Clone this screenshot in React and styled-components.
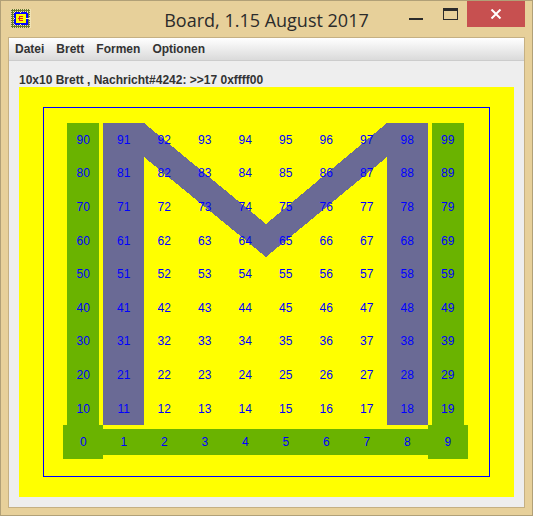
import React from "react";
import styled, { createGlobalStyle } from "styled-components";

const GlobalStyle = createGlobalStyle`
  *, *::before, *::after { box-sizing: border-box; }
  html, body, #root { height: 100%; }
  body { margin: 0; font-family: "Liberation Sans", Arial, sans-serif; }
  button { font: inherit; border: 0; padding: 0; background: none; }
`;

const Window = styled.main`
  display: flex;
  flex-direction: column;
  min-height: 100%;
  padding: 0 7px 7px;
  border: 1px solid #b1a077;
  background: #e7d09a;
`;

const TitleBar = styled.header`
  display: grid;
  grid-template-columns: 126px 1fr 126px;
  height: 36px;
`;

const AppIcon = styled.svg`
  margin: 8px 0 0 3px;
`;

const Title = styled.h1`
  margin: 0;
  font: 400 18px/38px "Open Sans", "Noto Sans", sans-serif;
  color: #2b2b2b;
  text-align: center;
  white-space: nowrap;
`;

const WindowButtons = styled.div`
  display: flex;
  justify-content: flex-end;
  height: 26px;
`;

const WindowButton = styled.button`
  width: ${(p) => (p.$close ? 58 : 34)}px;
  background: ${(p) => (p.$close ? "#c75050" : "transparent")};
  display: flex;
  align-items: center;
  justify-content: center;
`;

const Client = styled.div`
  flex: 1;
  display: flex;
  flex-direction: column;
  border: 1px solid #c5b083;
  background: #eeeeee;
`;

const MenuBar = styled.nav`
  display: flex;
  gap: 12px;
  height: 23px;
  padding: 0 6px;
  background: linear-gradient(#ffffff, #dadada);
  border-bottom: 1px solid #cccccc;
`;

const MenuButton = styled.button`
  font-size: 12px;
  font-weight: 700;
  line-height: 22px;
  color: #333333;
`;

const Content = styled.section`
  flex: 1;
  display: flex;
  flex-direction: column;
  padding: 12px 10px 10px;
`;

const Status = styled.p`
  margin: 0;
  font-size: 12px;
  font-weight: 700;
  line-height: 14px;
  color: #333333;
`;

const Canvas = styled.div`
  flex: 1;
  display: flex;
  padding: 20px 24px;
  background: #ffff00;
`;

const Frame = styled.div`
  flex: 1;
  display: flex;
  padding: 15px 21px 17px 19px;
  border: 1px solid #0000ff;
`;

const Board = styled.div`
  position: relative;
  flex: 1;
  display: flex;
`;

const Shapes = styled.svg`
  position: absolute;
  inset: 0;
  width: 100%;
  height: 100%;
`;

const Fields = styled.div`
  position: relative;
  flex: 1;
  display: grid;
  grid-template-columns: repeat(10, 1fr);
  grid-template-rows: repeat(10, 1fr);
`;

const Field = styled.span`
  display: flex;
  align-items: center;
  justify-content: center;
  font-size: 12px;
  line-height: 14px;
  color: #0000ff;
`;

const menus = ["Datei", "Brett", "Formen", "Optionen"];
const fields = Array.from({ length: 100 }, (_, i) => (9 - Math.floor(i / 10)) * 10 + (i % 10));

export default function App() {
  return (
    <>
      <GlobalStyle />
      <Window>
        <TitleBar>
          <AppIcon width="20" height="19" viewBox="0 0 20 19" shapeRendering="crispEdges" aria-hidden="true">
            <defs>
              <pattern id="weave" width="2" height="2" patternUnits="userSpaceOnUse">
                <rect width="2" height="2" fill="#66752f" />
                <rect width="1" height="1" fill="#e8dca8" />
              </pattern>
            </defs>
            <rect width="19" height="19" fill="url(#weave)" />
            <path d="M19 0h1v19h-1z" fill="#f0e2b4" />
            <path d="M3 3h14v13H3z" fill="#0000ff" />
            <path d="M5 5h10v9H5z" fill="#ffff00" />
            <path d="M3 3h1v1H3zM16 3h1v1h-1zM3 15h1v1H3zM9 3h1v1H9zM9 15h1v1H9zM3 9h1v1H3z" fill="#fff6a0" />
            <path d="M15 9h4v1h-4z" fill="#f4efc4" />
            <path d="M8 7h4v1H9v1h3v1H9v1h3v1H8v-2H7V9h1z" fill="#e0202c" />
          </AppIcon>
          <Title>Board, 1.15 August 2017</Title>
          <WindowButtons>
            <WindowButton aria-label="Minimieren">
              <svg width="14" height="12" viewBox="0 0 14 12" shapeRendering="crispEdges">
                <rect x="0" y="10" width="14" height="2" fill="#2b2b2b" />
              </svg>
            </WindowButton>
            <WindowButton aria-label="Maximieren">
              <svg width="15" height="12" viewBox="0 0 15 12" shapeRendering="crispEdges">
                <path d="M0 0h15v12H0zM1 3v8h13V3z" fill="#2b2b2b" fillRule="evenodd" />
              </svg>
            </WindowButton>
            <WindowButton $close aria-label="Schließen">
              <svg width="12" height="10" viewBox="0 0 12 10">
                <path d="M1.5 0.5L10.5 9.5M10.5 0.5L1.5 9.5" stroke="#ffffff" strokeWidth="2" />
              </svg>
            </WindowButton>
          </WindowButtons>
        </TitleBar>
        <Client>
          <MenuBar>
            {menus.map((m) => (
              <MenuButton key={m}>{m}</MenuButton>
            ))}
          </MenuBar>
          <Content>
            <Status>10x10 Brett , Nachricht#4242: &gt;&gt;17 0xffff00</Status>
            <Canvas>
              <Frame>
                <Board>
                  <Shapes viewBox="0 0 405 336" preserveAspectRatio="none" shapeRendering="crispEdges" aria-hidden="true">
                    <path d="M4 0H36V302H40V306H365V302H369V0H401V302H405V336H365V332H40V336H0V302H4Z" fill="#6ab300" />
                    <path d="M40 0H81L203 101L324 0H365V302H324V34L203 134L81 34V302H40Z" fill="#6a6a95" />
                  </Shapes>
                  <Fields>
                    {fields.map((n) => (
                      <Field key={n}>{n}</Field>
                    ))}
                  </Fields>
                </Board>
              </Frame>
            </Canvas>
          </Content>
        </Client>
      </Window>
    </>
  );
}
